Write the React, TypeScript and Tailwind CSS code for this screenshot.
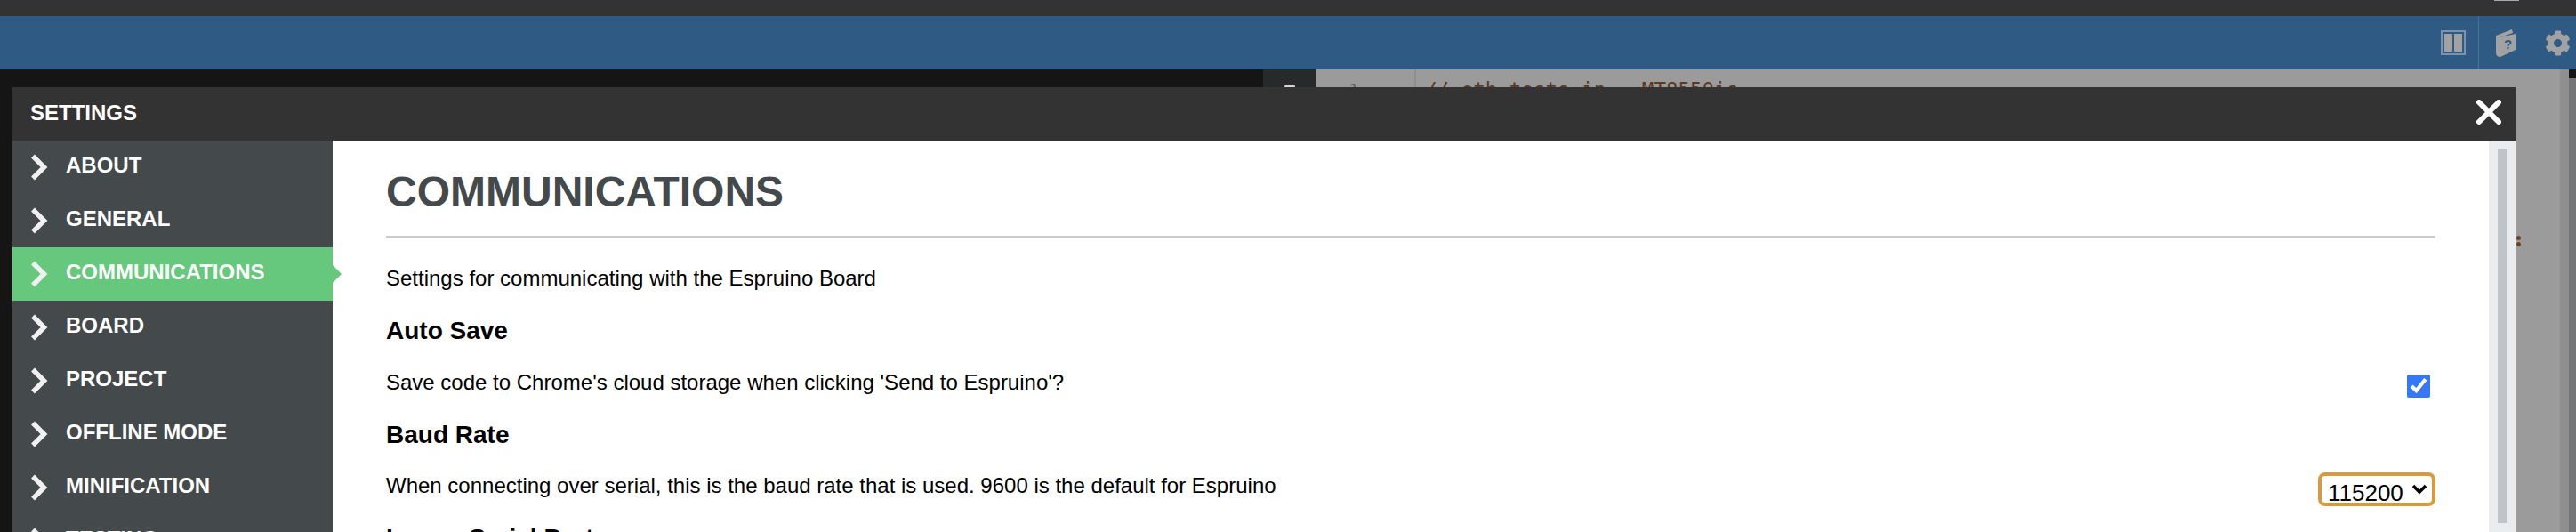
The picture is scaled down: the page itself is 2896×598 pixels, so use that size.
import { FaCog } from 'react-icons/fa'

const menu = ['ABOUT', 'GENERAL', 'COMMUNICATIONS', 'BOARD', 'PROJECT', 'OFFLINE MODE', 'MINIFICATION', 'TESTING']

function Chevron() {
  return (
    <svg width="20" height="30" viewBox="0 0 20 30" className="shrink-0 text-[#f0f0f0]">
      <path d="M3 2.5 L15.5 15 L3 27.5" fill="none" stroke="currentColor" strokeWidth="5.5" />
    </svg>
  )
}

function MenuItem({ label, active }: { label: string; active: boolean }) {
  return (
    <div className={`relative flex h-[60px] shrink-0 items-center pl-[20px] ${active ? 'bg-[#66c87c]' : ''}`}>
      <Chevron />
      <span className="ml-[20px] -mt-[4px] text-[24px] font-bold text-white">{label}</span>
      {active && (
        <div className="absolute -right-[10px] top-[20px] h-0 w-0 border-y-[10px] border-l-[10px] border-y-transparent border-l-[#66c87c]" />
      )}
    </div>
  )
}

function BookIcon() {
  return (
    <svg width="24" height="32" viewBox="0 0 24 32">
      <path d="M1 8 L19 1 L20 5 L5 10 L23 6 L23 24 L6 32 C3 32 1 30 1 27 Z" fill="#a2a2a2" />
      <text x="10" y="23" fontSize="15" fontWeight="700" fill="#2f5a84" fontFamily="Liberation Sans">?</text>
    </svg>
  )
}

export default function App() {
  return (
    <div className="relative h-[598px] w-[2896px] overflow-hidden bg-[#151515] font-['Liberation_Sans',sans-serif]">
      <div className="flex h-[18px] justify-end bg-[#333333] pr-[64px]">
        <div className="h-px w-[28px] bg-[#a8a8a8]" />
      </div>
      <div className="flex h-[60px] items-center justify-end bg-[#2f5a84] pr-[6px]">
        <div className="mr-[14px] flex h-[28px] w-[28px] gap-[2px] border-2 border-[#7f93a8] p-[2px]">
          <div className="flex-1 bg-[#a2a2a2]" />
          <div className="flex-1 bg-[#a2a2a2]" />
        </div>
        <div className="mr-[18px] h-full w-px bg-[#4d7193]" />
        <div className="mr-[32px]"><BookIcon /></div>
        <FaCog size={29} className="text-[#a2a2a2]" />
      </div>

      {/* editor behind the overlay */}
      <div className="flex h-[520px]">
        <div className="w-[1420px] bg-[#151515]" />
        <div className="flex w-[60px] justify-center bg-[#262a2b] pt-[17px]">
          <div className="h-[3px] w-[12px] rounded-t-full bg-[#d5d5d5]" />
        </div>
        <div className="w-[112px] border-r-2 border-[#8e8e8e] bg-[#9b9b9b] pr-[62px] pt-[11px] text-right font-['DejaVu_Sans_Mono',monospace] text-[20px] leading-[24px] text-[#666666]">
          1
        </div>
        <div className="flex flex-1">
          <div className="relative flex-1 bg-[#9b9b9b] pl-[10px] pt-[11px] font-['DejaVu_Sans_Mono',monospace] text-[22.5px] leading-[24px] text-[#5a3a25]">
            // eth tests in - MT8550is
            <div className="absolute left-[1237px] top-[187px] flex flex-col gap-[2px]">
              <div className="h-[5px] w-[5px] rounded-full bg-[#6b4428]" />
              <div className="h-[5px] w-[5px] rounded-full bg-[#6b4428]" />
            </div>
          </div>
          <div className="w-[10px] bg-[#8f8f90]" />
          <div className="mt-[10px] w-[8px] bg-[#737578]" />
        </div>
      </div>

      {/* settings window */}
      <div className="absolute left-[14px] top-[98px] w-[2814px]">
        <div className="flex h-[60px] items-center justify-between bg-[#333333] pl-[20px] pr-[16px]">
          <span className="-mt-[2px] text-[24px] font-bold text-white">SETTINGS</span>
          <svg width="28" height="28" viewBox="0 0 28 28" className="-mt-[4px]">
            <path d="M3 3 L25 25 M25 3 L3 25" stroke="#ffffff" strokeWidth="6" strokeLinecap="round" />
          </svg>
        </div>
        <div className="flex h-[440px] bg-white">
          <div className="flex w-[360px] shrink-0 flex-col bg-[#44494b]">
            {menu.map(m => <MenuItem key={m} label={m} active={m === 'COMMUNICATIONS'} />)}
          </div>
          <div className="min-w-0 flex-1 pl-[60px] pr-[60px] pt-[30px] text-black">
            <h1 className="border-b-2 border-[#cccccc] pb-[21px] text-[48px] font-bold leading-[56px] text-[#44494b]">COMMUNICATIONS</h1>
            <p className="mt-[31px] text-[24px] leading-[30px]">Settings for communicating with the Espruino Board</p>
            <h2 className="mt-[27px] text-[28px] font-bold leading-[34px]">Auto Save</h2>
            <div className="mt-[26px] flex items-start justify-between">
              <p className="text-[24px] leading-[30px]">Save code to Chrome's cloud storage when clicking 'Send to Espruino'?</p>
              <input type="checkbox" defaultChecked className="mr-[6px] mt-[6px] h-[26px] w-[26px] accent-[#3478f6]" />
            </div>
            <h2 className="mt-[25px] text-[28px] font-bold leading-[34px]">Baud Rate</h2>
            <div className="mt-[25px] flex items-start justify-between">
              <p className="text-[24px] leading-[30px]">When connecting over serial, this is the baud rate that is used. 9600 is the default for Espruino</p>
              <div className="relative">
                <select defaultValue="115200" className="block h-[38px] w-[132px] appearance-none rounded-[8px] border-[4px] border-[#d89a3e] bg-white pl-[7px] text-[26px] text-black outline-none">
                  <option>115200</option>
                </select>
                <svg width="18" height="12" viewBox="0 0 18 12" className="pointer-events-none absolute right-[9px] top-[13px]">
                  <path d="M2 2 L9 9 L16 2" fill="none" stroke="#000000" strokeWidth="3.5" />
                </svg>
              </div>
            </div>
            <h2 className="mt-[19px] text-[28px] font-bold leading-[34px]">Ignore Serial Ports</h2>
          </div>
          <div className="flex w-[30px] shrink-0 justify-center bg-[#e9edef] py-[10px]">
            <div className="h-full w-[10px] bg-[#bfc4c8]" />
          </div>
        </div>
      </div>
    </div>
  )
}
